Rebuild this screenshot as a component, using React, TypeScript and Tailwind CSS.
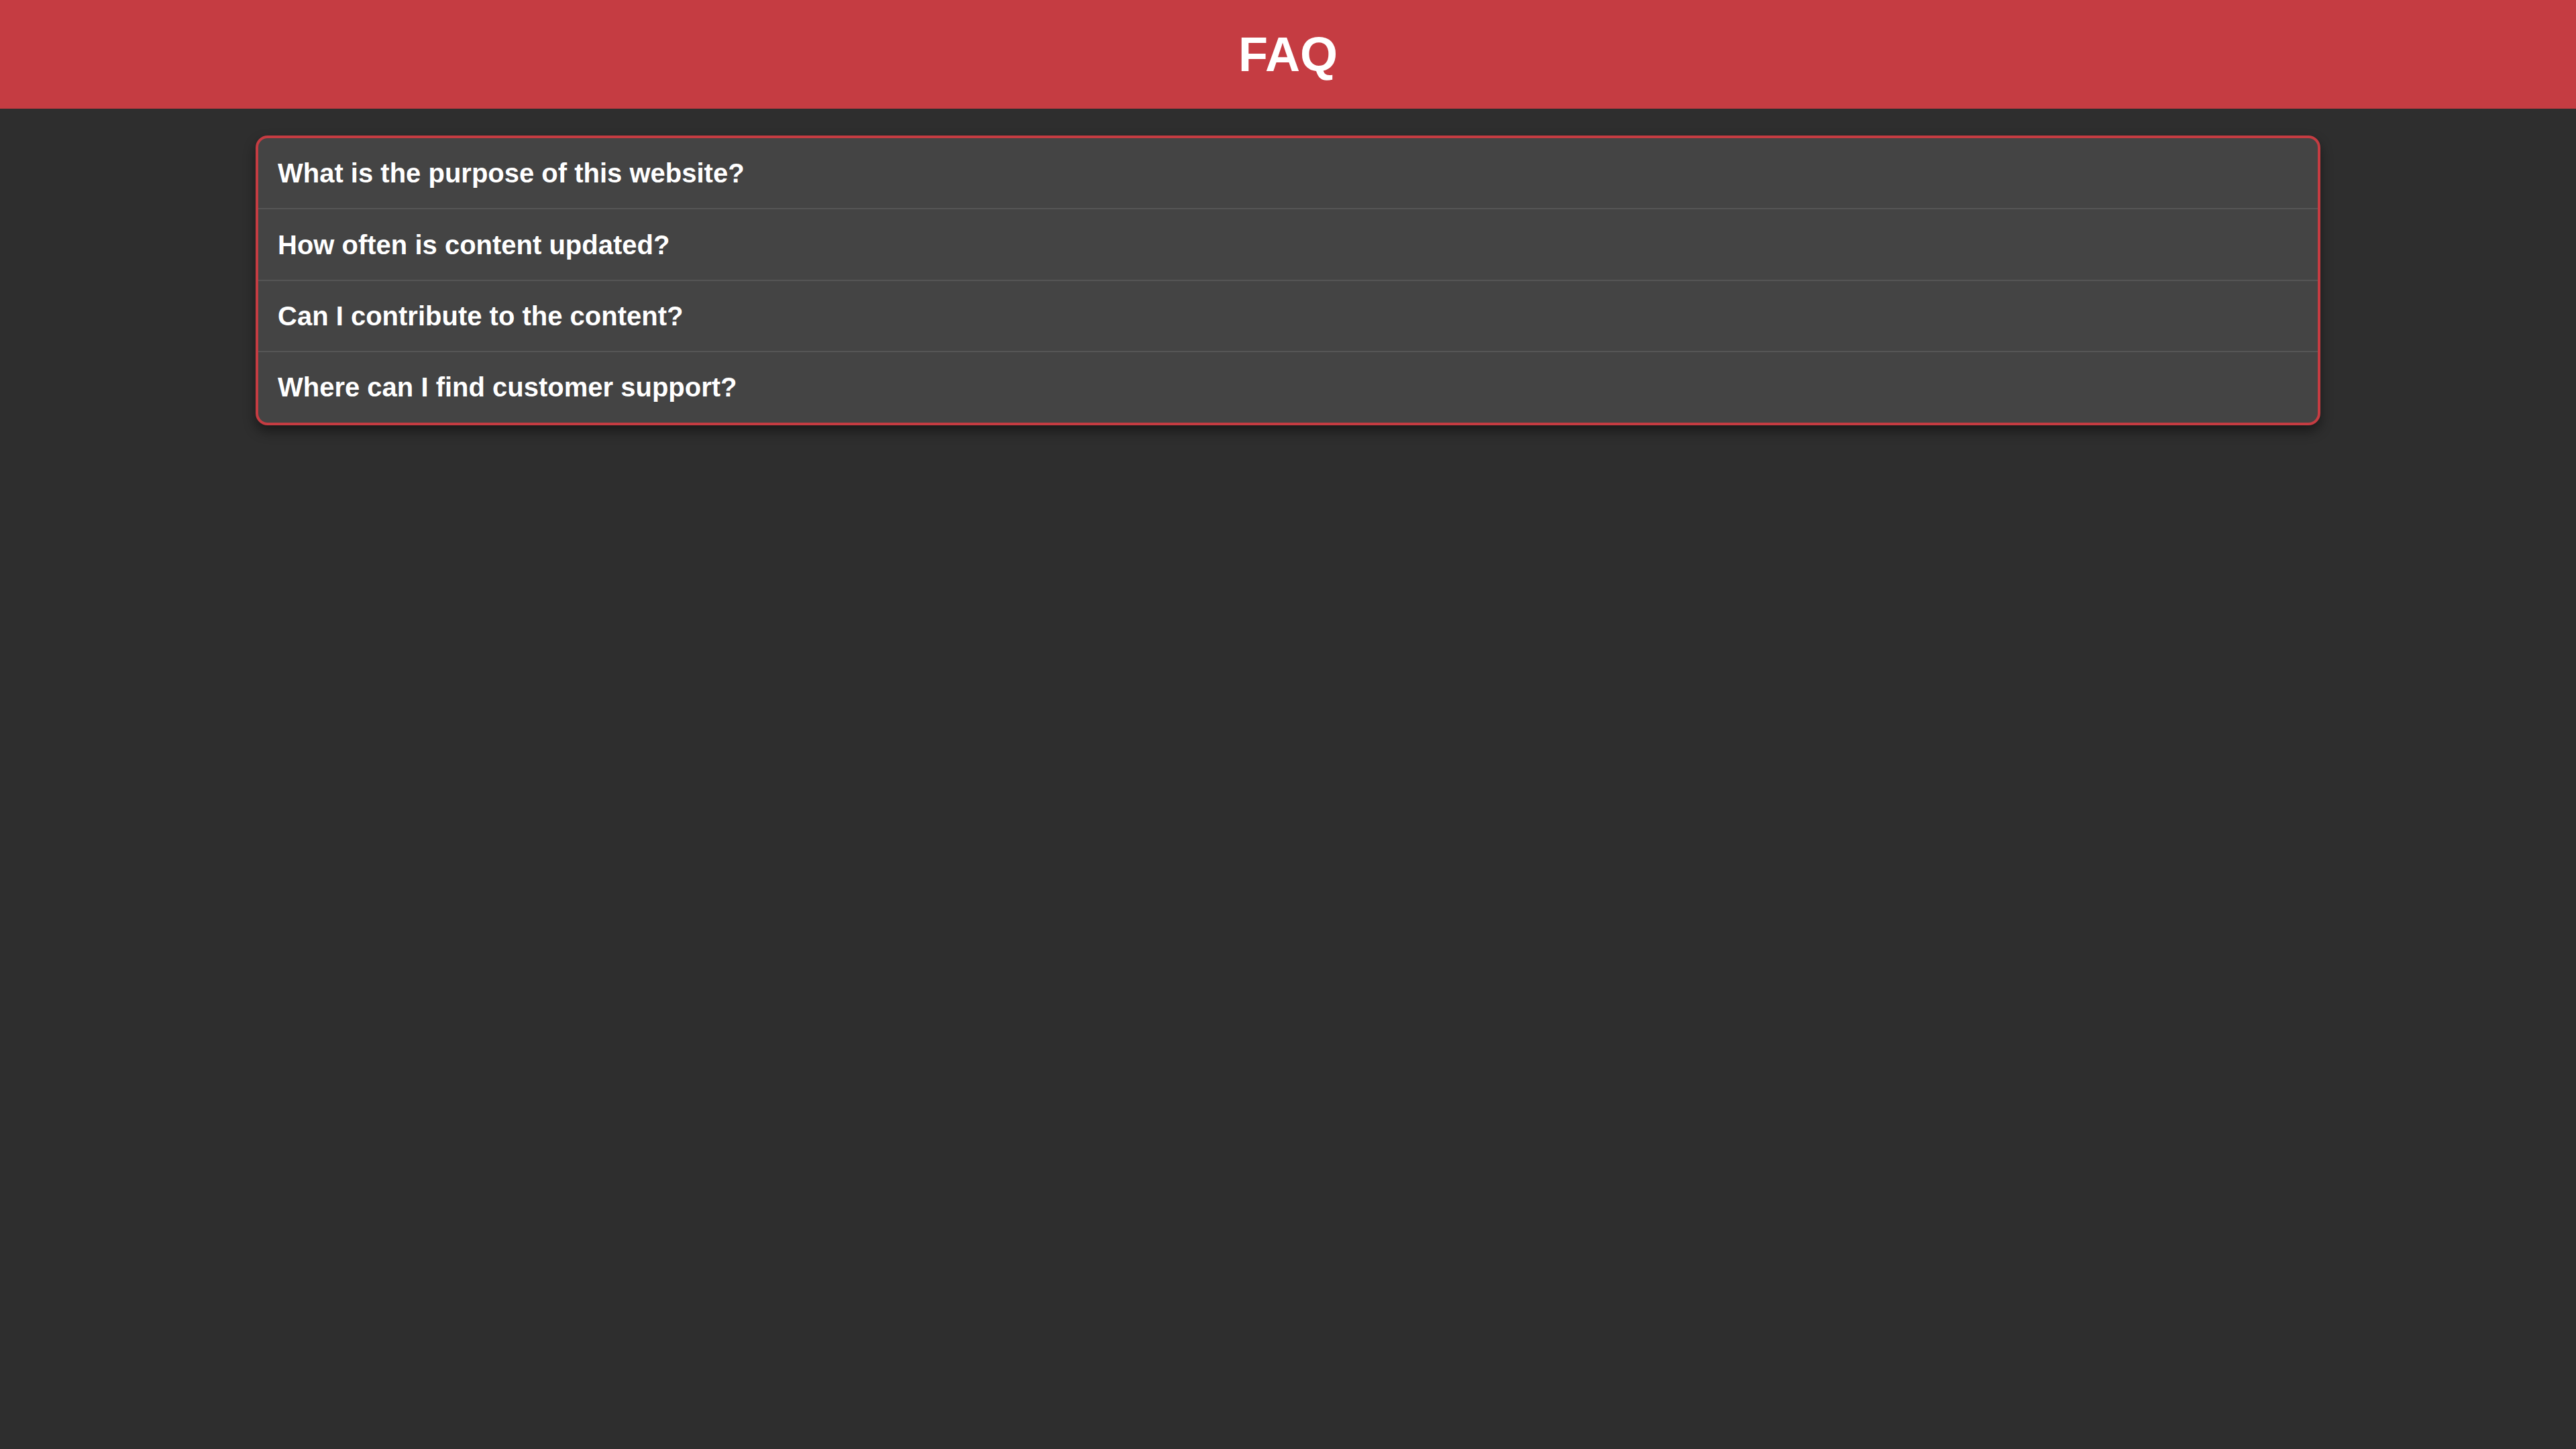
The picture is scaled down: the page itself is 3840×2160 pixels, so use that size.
const questions = [
  'What is the purpose of this website?',
  'How often is content updated?',
  'Can I contribute to the content?',
  'Where can I find customer support?',
];

export default function App() {
  return (
    <div className="min-h-screen bg-[#2e2e2e] font-['Liberation_Sans',Arial,sans-serif] text-white">
      <header className="flex h-[162px] items-center justify-center bg-[#c53c42]">
        <h1 className="text-[72px] font-bold leading-[1.15]">FAQ</h1>
      </header>
      <main className="pt-[40px]">
        <div className="mx-auto w-[3078px] overflow-hidden rounded-[18px] border-[4.5px] border-[#c53c42] bg-[#444444] shadow-[0_9px_18px_rgba(0,0,0,0.45)]">
          {questions.map((q, i) => (
            <div
              key={q}
              className={`px-[29px] py-[29.2px] text-[40px] font-bold leading-[46px] ${
                i < questions.length - 1 ? 'border-b-[2.25px] border-[#555555]' : ''
              }`}
            >
              {q}
            </div>
          ))}
        </div>
      </main>
    </div>
  );
}
